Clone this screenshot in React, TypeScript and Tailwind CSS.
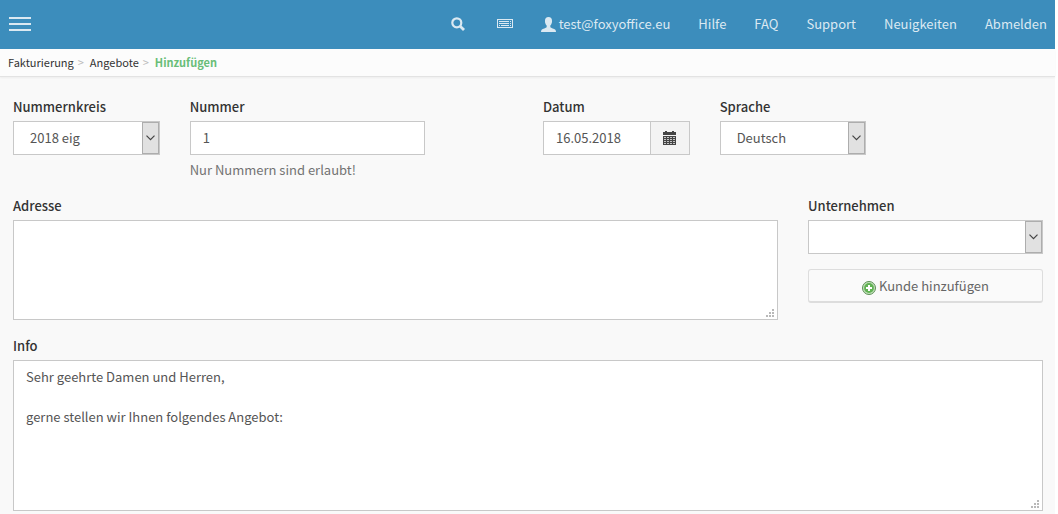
import { useState } from "react";
import type { ReactNode } from "react";

const fieldClass =
  "w-full border border-[#c8c8c8] bg-white text-[13px] leading-5 text-[#555]";

const navLinks = ["Hilfe", "FAQ", "Support", "Neuigkeiten", "Abmelden"];

const SearchIcon = () => (
  <svg width="14" height="14" viewBox="0 0 14 14" fill="none" stroke="currentColor">
    <circle cx="5.8" cy="5.8" r="4.5" strokeWidth="2.2" />
    <path d="M9.2 9.2 13 13" strokeWidth="2.8" />
  </svg>
);

const KeyboardIcon = () => (
  <svg width="16" height="10" viewBox="0 0 16 10" fill="none" stroke="currentColor">
    <rect x=".5" y=".5" width="15" height="8" />
    <path d="M2 2.5h12M2 4.5h12" strokeDasharray="10 1" />
    <path d="M2 6.5h1M4 6.5h8M13 6.5h1" />
  </svg>
);

const UserIcon = () => (
  <svg width="15" height="15" viewBox="0 0 14 14" fill="currentColor">
    <path d="M7 0C4.9 0 3.7 1.5 3.7 3.7c0 1.8.6 3.300 1.600 4.200v1.600C4.800 10.300 1.500 10.700.6 12 .2 12.600 0 13.300 0 14h14c0-.7-.2-1.400-.6-2-.9-1.300-4.200-1.700-4.700-2.500V7.900c1-.9 1.600-2.400 1.600-4.200C10.300 1.500 9.100 0 7 0z" />
  </svg>
);

const CalendarIcon = () => (
  <svg width="13" height="14" viewBox="0 0 13 14" shapeRendering="crispEdges">
    <path fill="#444" d="M0 1h2V0h2v1h5V0h2v1h2v3H0zM0 5h13v9H0z" />
    <path
      stroke="#c4c4c4"
      d="M1 6.500h11M1 8.500h11M1 10.500h11M1 12.500h11"
      strokeDasharray="2 1"
    />
  </svg>
);

const AddIcon = () => (
  <svg width="14" height="14" viewBox="0 0 14 14">
    <circle cx="7" cy="7" r="6.500" fill="#c5e2bd" stroke="#5c8f55" />
    <circle cx="7" cy="7" r="4.900" fill="#62b254" />
    <path d="M7 4v6M4 7h6" stroke="#fff" strokeWidth="2" />
  </svg>
);

const ResizeGrip = () => (
  <svg
    className="pointer-events-none absolute right-1 bottom-[3px]"
    width="8"
    height="8"
    viewBox="0 0 8 8"
    fill="#b9b9b9"
    shapeRendering="crispEdges"
  >
    <path d="M6 0h2v2H6zM3 3h2v2H3zM6 3h2v2H6zM0 6h2v2H0zM3 6h2v2H3zM6 6h2v2H6z" />
  </svg>
);

type FieldProps = {
  id: string;
  label: string;
  className: string;
  children: ReactNode;
};

const Field = ({ id, label, className, children }: FieldProps) => (
  <div className={className}>
    <label
      htmlFor={id}
      className="mb-1 block text-[13px] leading-5 font-medium text-[#333]"
    >
      {label}
    </label>
    {children}
  </div>
);

const Select = ({ id, options }: { id: string; options: string[] }) => (
  <div className="relative">
    <select id={id} className={`${fieldClass} h-[34px] appearance-none pr-6 pl-4`}>
      {options.map((option) => (
        <option key={option}>{option}</option>
      ))}
    </select>
    <span className="pointer-events-none absolute inset-y-px right-px flex w-[17px] items-center justify-center border border-[#adadad] bg-[#e1e1e1]">
      <svg width="9" height="6" viewBox="0 0 9 6" fill="none" stroke="#444">
        <path d="M.5.7 4.500 4.700 8.500.7" strokeWidth="1.200" />
      </svg>
    </span>
  </div>
);

const Header = () => (
  <header className="flex h-[49px] items-center justify-between bg-[#3c8dbc] pr-2 pb-px pl-[9px] text-[#dbe9f2]">
    <button type="button" aria-label="Menü" className="flex w-[22px] flex-col gap-1">
      <span className="h-[2px] w-full bg-current" />
      <span className="h-[2px] w-full bg-current" />
      <span className="h-[2px] w-full bg-current" />
    </button>
    <nav className="flex items-center gap-7 text-[13px] leading-5">
      <a href="#suche" aria-label="Suche" className="mr-1">
        <SearchIcon />
      </a>
      <a href="#tastatur" aria-label="Tastatur">
        <KeyboardIcon />
      </a>
      <a href="#konto" className="flex items-center gap-[3px]">
        <UserIcon />
        test@foxyoffice.eu
      </a>
      {navLinks.map((link) => (
        <a key={link} href={`#${link.toLowerCase()}`}>
          {link}
        </a>
      ))}
    </nav>
  </header>
);

const Breadcrumb = () => (
  <nav className="flex h-7 items-center gap-1 border-b border-[#e3e3e3] bg-[#fcfcfc] px-2 pb-px text-[11px] leading-5 text-[#333] shadow-xs">
    <a href="#fakturierung">Fakturierung</a>
    <span className="mr-[2px] text-[#bbb]">&gt;</span>
    <a href="#angebote">Angebote</a>
    <span className="mr-[2px] text-[#bbb]">&gt;</span>
    <span className="font-bold text-[#69be78]">Hinzufügen</span>
  </nav>
);

const App = () => {
  const [number, setNumber] = useState("1");
  const [date, setDate] = useState("16.05.2018");

  return (
    <div className="min-h-screen border-r-[3px] border-white bg-[#f9f9f9] font-['Noto_Sans_CJK_SC',sans-serif]">
      <Header />
      <Breadcrumb />
      <form className="grid grid-cols-12 gap-x-[30px] pt-5 pr-3 pl-[13px]">
        <Field id="range" label="Nummernkreis" className="col-span-2">
          <Select id="range" options={["2018 eig"]} />
        </Field>
        <Field id="number" label="Nummer" className="col-span-3">
          <input
            id="number"
            className={`${fieldClass} h-[34px] px-3 pb-[2px]`}
            value={number}
            onChange={(e) => setNumber(e.target.value)}
          />
          <p className="mt-[5px] text-[13px] leading-5 text-[#737373]">
            Nur Nummern sind erlaubt!
          </p>
        </Field>
        <Field id="date" label="Datum" className="col-span-2 col-start-7">
          <div className="flex">
            <input
              id="date"
              className={`${fieldClass} h-[34px] min-w-0 flex-1 px-3 pb-[2px]`}
              value={date}
              onChange={(e) => setDate(e.target.value)}
            />
            <button
              type="button"
              aria-label="Kalender"
              className="flex w-[39px] items-center justify-center border border-l-0 border-[#c8c8c8] bg-[#f3f3f3]"
            >
              <CalendarIcon />
            </button>
          </div>
        </Field>
        <Field id="language" label="Sprache" className="col-span-2">
          <Select id="language" options={["Deutsch", "Englisch"]} />
        </Field>

        <Field id="address" label="Adresse" className="col-span-9 mt-4">
          <div className="relative">
            <textarea
              id="address"
              className={`${fieldClass} block h-[100px] resize-none px-3 py-[6px]`}
            />
            <ResizeGrip />
          </div>
        </Field>
        <Field id="company" label="Unternehmen" className="col-span-3 mt-4">
          <Select id="company" options={[""]} />
          <button
            type="button"
            className="mt-[15px] flex h-[34px] w-full items-center justify-center gap-[3px] rounded-[3px] border border-b-2 border-[#ddd] bg-[#fafafa] text-[13px] leading-5 text-[#666]"
          >
            <span className="pt-1">
              <AddIcon />
            </span>
            Kunde hinzufügen
          </button>
        </Field>

        <Field id="info" label="Info" className="col-span-12 mt-4">
          <div className="relative">
            <textarea
              id="info"
              className={`${fieldClass} block h-[151px] resize-none px-3 py-[6px]`}
              defaultValue={
                "Sehr geehrte Damen und Herren,\n\ngerne stellen wir Ihnen folgendes Angebot:"
              }
            />
            <ResizeGrip />
          </div>
        </Field>
      </form>
    </div>
  );
};

export default App;
